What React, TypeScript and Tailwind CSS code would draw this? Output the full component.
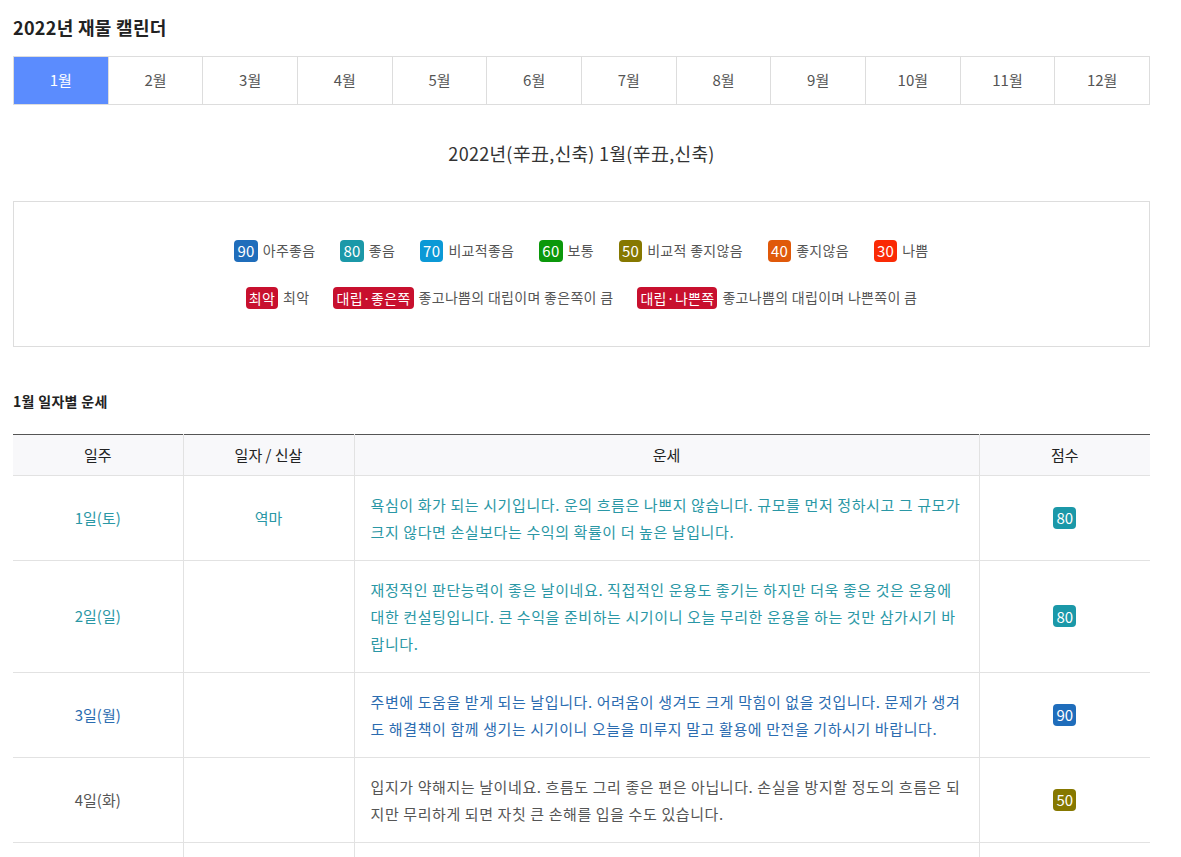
import React from "react";

const FONT = "font-['Noto_Sans_CJK_KR','Noto_Sans',sans-serif]";

const months = ["1월", "2월", "3월", "4월", "5월", "6월", "7월", "8월", "9월", "10월", "11월", "12월"];

const scoreColor: Record<number, { bg: string; text: string }> = {
  90: { bg: "bg-[#1f6dbb]", text: "text-[#2b6cb0]" },
  80: { bg: "bg-[#1b98a8]", text: "text-[#2a97a5]" },
  70: { bg: "bg-[#0b99d6]", text: "text-[#0b99d6]" },
  60: { bg: "bg-[#0b980b]", text: "text-[#0b980b]" },
  50: { bg: "bg-[#867800]", text: "text-[#555555]" },
  40: { bg: "bg-[#e0590a]", text: "text-[#e0590a]" },
  30: { bg: "bg-[#fa2a05]", text: "text-[#fa2a05]" },
};

const legend = [
  { score: 90, label: "아주좋음" },
  { score: 80, label: "좋음" },
  { score: 70, label: "비교적좋음" },
  { score: 60, label: "보통" },
  { score: 50, label: "비교적 좋지않음" },
  { score: 40, label: "좋지않음" },
  { score: 30, label: "나쁨" },
];

const days = [
  {
    day: "1일(토)",
    sinsal: "역마",
    text: "욕심이 화가 되는 시기입니다. 운의 흐름은 나쁘지 않습니다. 규모를 먼저 정하시고 그 규모가 크지 않다면 손실보다는 수익의 확률이 더 높은 날입니다.",
    score: 80,
  },
  {
    day: "2일(일)",
    sinsal: "",
    text: "재정적인 판단능력이 좋은 날이네요. 직접적인 운용도 좋기는 하지만 더욱 좋은 것은 운용에 대한 컨설팅입니다. 큰 수익을 준비하는 시기이니 오늘 무리한 운용을 하는 것만 삼가시기 바랍니다.",
    score: 80,
  },
  {
    day: "3일(월)",
    sinsal: "",
    text: "주변에 도움을 받게 되는 날입니다. 어려움이 생겨도 크게 막힘이 없을 것입니다. 문제가 생겨도 해결책이 함께 생기는 시기이니 오늘을 미루지 말고 활용에 만전을 기하시기 바랍니다.",
    score: 90,
  },
  {
    day: "4일(화)",
    sinsal: "",
    text: "입지가 약해지는 날이네요. 흐름도 그리 좋은 편은 아닙니다. 손실을 방지할 정도의 흐름은 되지만 무리하게 되면 자칫 큰 손해를 입을 수도 있습니다.",
    score: 50,
  },
];

const Badge = ({ score }: { score: number }) => (
  <span
    className={`inline-flex h-[22px] items-center rounded-[4px] px-[3px] text-[15px] leading-none text-white ${scoreColor[score].bg}`}
  >
    {score}
  </span>
);

const RedBadge = ({ children }: { children: React.ReactNode }) => (
  <span className="inline-flex h-[22px] items-center rounded-[4px] bg-[#c8102e] px-[3px] text-[14px] leading-none text-white">
    {children}
  </span>
);

export default function App() {
  return (
    <div className={`${FONT} min-h-[857px] bg-white text-[#222]`}>
      <div className="w-[1137px] ml-[13px] pt-[14px]">
        <h1 className="text-[18px] font-bold leading-[26px] tracking-[0.3px] text-[#222]">2022년 재물 캘린더</h1>

        <div className="mt-[16px] grid grid-cols-12 border-t border-l border-[#dddddd]">
          {months.map((m, i) => (
            <div
              key={m}
              className={`flex h-[48px] items-center justify-center border-r border-b border-[#dddddd] text-[15px] ${
                i === 0 ? "bg-[#5b8cfe] text-white border-[#5b8cfe]" : "text-[#555]"
              }`}
            >
              {m}
            </div>
          ))}
        </div>

        <div className="mt-[36px] text-center text-[18px] leading-[24px] tracking-[0.3px] text-[#333]">
          2022년(辛丑,신축) 1월(辛丑,신축)
        </div>

        <div className="mt-[36px] flex h-[146px] flex-col items-center justify-center gap-[25px] border border-[#dddddd]">
          <div className="flex items-center gap-[25px] text-[14px] tracking-[0.3px] text-[#555]">
            {legend.map((l) => (
              <div key={l.score} className="flex items-center gap-[5px]">
                <Badge score={l.score} />
                <span>{l.label}</span>
              </div>
            ))}
          </div>
          <div className="flex items-center gap-[24px] text-[14px] tracking-[0.3px] text-[#555]">
            <div className="flex items-center gap-[5px]">
              <RedBadge>최악</RedBadge>
              <span>최악</span>
            </div>
            <div className="flex items-center gap-[5px]">
              <RedBadge>대립·좋은쪽</RedBadge>
              <span>좋고나쁨의 대립이며 좋은쪽이 큼</span>
            </div>
            <div className="flex items-center gap-[5px]">
              <RedBadge>대립·나쁜쪽</RedBadge>
              <span>좋고나쁨의 대립이며 나쁜쪽이 큼</span>
            </div>
          </div>
        </div>

        <h2 className="mt-[43px] text-[14px] font-bold leading-[22px] tracking-[0.3px] text-[#222]">1월 일자별 운세</h2>

        <table className="mt-[22px] w-full table-fixed border-collapse border-t border-t-[#555]">
          <colgroup>
            <col className="w-[170px]" />
            <col className="w-[171px]" />
            <col className="w-[625px]" />
            <col className="w-[171px]" />
          </colgroup>
          <thead>
            <tr className="h-[41px] bg-[#f8f8fa] text-[15px] text-[#222]">
              <th className="border-b border-r border-[#e2e2e2] font-normal">일주</th>
              <th className="border-b border-r border-[#e2e2e2] font-normal">일자 / 신살</th>
              <th className="border-b border-r border-[#e2e2e2] font-normal">운세</th>
              <th className="border-b border-[#e2e2e2] font-normal">점수</th>
            </tr>
          </thead>
          <tbody>
            {days.map((d) => {
              const c = scoreColor[d.score].text;
              return (
                <tr key={d.day} className="text-[15px]">
                  <td className={`border-b border-r border-[#e2e2e2] text-center ${c}`}>{d.day}</td>
                  <td className={`border-b border-r border-[#e2e2e2] text-center ${c}`}>{d.sinsal}</td>
                  <td
                    className={`border-b border-r border-[#e2e2e2] px-[16px] py-[15px] leading-[27px] tracking-[0.6px] ${c}`}
                  >
                    {d.text}
                  </td>
                  <td className="border-b border-[#e2e2e2] text-center">
                    <Badge score={d.score} />
                  </td>
                </tr>
              );
            })}
            <tr className="h-[84px]">
              <td className="border-b border-r border-[#e2e2e2]"></td>
              <td className="border-b border-r border-[#e2e2e2]"></td>
              <td className="border-b border-r border-[#e2e2e2]"></td>
              <td className="border-b border-[#e2e2e2]"></td>
            </tr>
          </tbody>
        </table>
      </div>
    </div>
  );
}
